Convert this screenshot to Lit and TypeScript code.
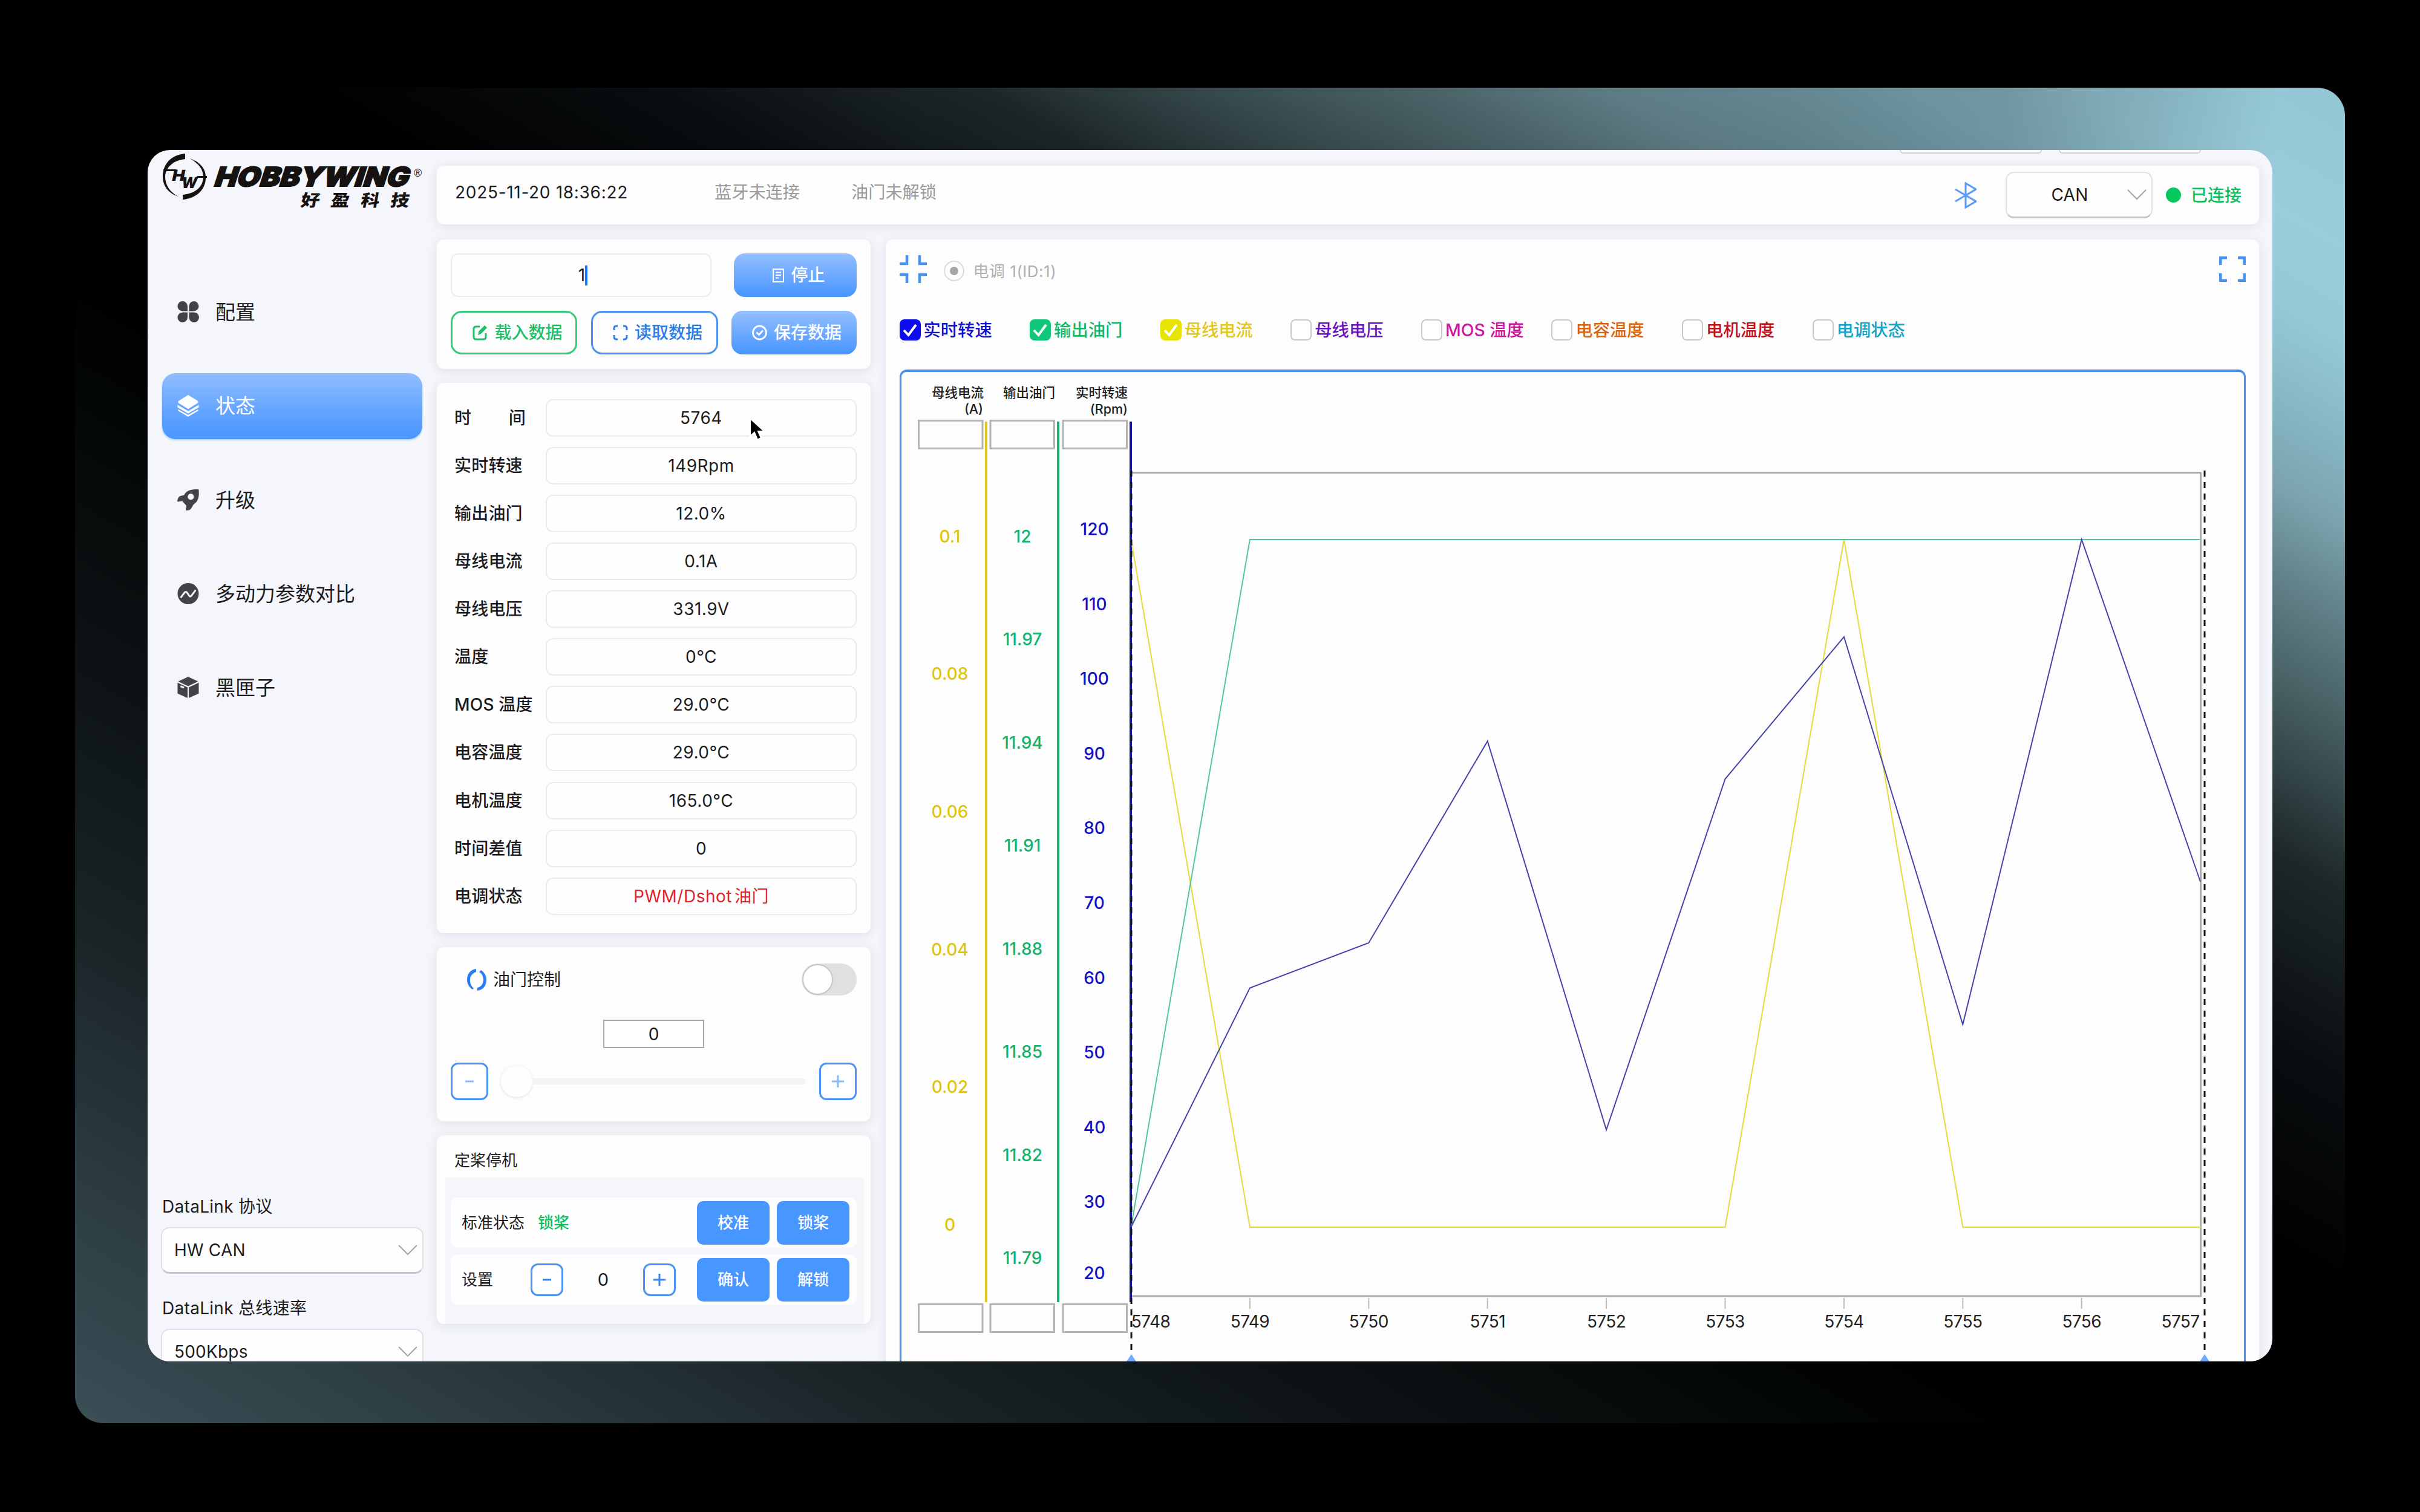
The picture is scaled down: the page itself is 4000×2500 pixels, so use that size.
import { LitElement, html, css, svg } from "lit";
import { customElement, property } from "lit/decorators.js";
import { classMap } from "lit/directives/class-map.js";

const X0 = 382.5;
const STEP = 196.4;
const Y_TOP = 281;
const Y_BOTTOM = 1418;

const FIELDS: [string, string][] = [
  ["实时转速", "149Rpm"],
  ["输出油门", "12.0%"],
  ["母线电流", "0.1A"],
  ["母线电压", "331.9V"],
  ["温度", "0°C"],
  ["MOS 温度", "29.0°C"],
  ["电容温度", "29.0°C"],
  ["电机温度", "165.0°C"],
  ["时间差值", "0"],
];

const SERIES = [
  { name: "实时转速", color: "#1010c8", box: "#0d0df0", on: true },
  { name: "输出油门", color: "#12b866", box: "#10c878", on: true },
  { name: "母线电流", color: "#e3c81c", box: "#e8e400", on: true },
  { name: "母线电压", color: "#6a14c0", box: "", on: false },
  { name: "MOS 温度", color: "#d0149c", box: "", on: false },
  { name: "电容温度", color: "#dc6410", box: "", on: false },
  { name: "电机温度", color: "#c01018", box: "", on: false },
  { name: "电调状态", color: "#10a4c8", box: "", on: false },
];

@customElement("hw-logo")
export class HwLogo extends LitElement {
  static styles = css`
    :host { display: block; width: 440px; height: 92px; }
    svg { display: block; overflow: visible; }
    .word { font: 900 44px Inter, "Liberation Sans", sans-serif; }
    .cn { font: 900 27px "Noto Sans CJK SC", sans-serif; }
    .reg { font: 400 18px "Liberation Sans", sans-serif; }
    .mono { font: 900 25px Inter, sans-serif; }
  `;
  render() {
    return html`<svg width="440" height="104" viewBox="0 0 440 104" fill="#161212">
      <path d="M38 2 C14 4 1 20 1 40 C1 56 11 68 27 73 C13 66 5 54 5 40 C6 25 18 13 38 11 Z" />
      <path d="M34 78 C58 76 73 60 72 40 C72 26 61 15 46 10 C60 18 68 28 68 40 C68 56 56 68 34 70 Z" />
      <path d="M2 28 L24 28 L22 31 L2 31 Z M58 39 L74 39 L74 42 L56 42 Z" />
      <g transform="skewX(-12)">
        <text class="mono" x="25" y="47" textLength="21" lengthAdjust="spacingAndGlyphs">H</text>
        <text class="mono" x="43" y="59" textLength="26" lengthAdjust="spacingAndGlyphs">W</text>
      </g>
      <g transform="translate(84 56) skewX(-18)">
        <text class="word" x="0" y="0" textLength="321" lengthAdjust="spacingAndGlyphs" stroke="#161212" stroke-width="2">HOBBYWING</text>
      </g>
      <text class="reg" x="416" y="40">®</text>
      <g transform="translate(228 89) skewX(-10) scale(1.15 1)">
        <text class="cn" x="0 43 86 129" y="0">好盈科技</text>
      </g>
    </svg>`;
  }
}

@customElement("hw-select")
export class HwSelect extends LitElement {
  @property() value = "";
  @property({ type: Boolean }) centered = false;
  static styles = css`
    :host { display: block; box-sizing: border-box; height: 77px; border-radius: 14px; background: #fefefe;
      border: 2px solid #e0e1e5; border-bottom: 3px solid #c4c6ca; }
    .row { display: flex; align-items: center; height: 72px; padding: 0 8px 0 20px; }
    .text { flex: 1; font-size: 28px; line-height: 40px; letter-spacing: 0.2px; }
    .mid { text-align: center; padding-right: 11px; }
    svg { display: block; }
  `;
  render() {
    return html`<div class="row">
      <span class=${classMap({ text: true, mid: this.centered })}>${this.value}</span>
      <svg width="32" height="18" viewBox="0 0 32 18" fill="none" stroke="#a2a4a8" stroke-width="2"><path d="M1 1 L16 16 L31 1" /></svg>
    </div>`;
  }
}

@customElement("hw-chart")
export class HwChart extends LitElement {
  static styles = css`
    :host { display: block; }
    svg { display: block; }
    .tick { font: 500 28px Inter, "Noto Sans CJK SC", sans-serif; text-anchor: middle; }
    .x { font: 400 28px Inter, sans-serif; text-anchor: middle; fill: #222; letter-spacing: -0.6px; }
    .title { font: 500 21.5px Inter, "Noto Sans CJK SC", sans-serif; text-anchor: end; fill: #1d1d1d; }
    .y1 { fill: #dfc510; }
    .y2 { fill: #12b46c; }
    .y3 { fill: #1212c4; }
    .cell { fill: #fdfdfd; stroke: #b4b4b4; stroke-width: 3; }
  `;
  private path(values: number[]) {
    return values.map((v, i) => `${X0 + STEP * i},${v}`).join(" ");
  }
  render() {
    const current = [Y_TOP, Y_BOTTOM, Y_BOTTOM, Y_BOTTOM, Y_BOTTOM, Y_BOTTOM, Y_TOP, Y_BOTTOM, Y_BOTTOM, Y_BOTTOM];
    const throttle = [Y_BOTTOM, ...Array(9).fill(Y_TOP)];
    const rpm = [Y_BOTTOM, 1022.5, 948, 614.5, 1257, 677, 442, 1083, Y_TOP, 847];
    const amps = ["0.1", "0.08", "0.06", "0.04", "0.02", "0"];
    const duty = ["12", "11.97", "11.94", "11.91", "11.88", "11.85", "11.82", "11.79"];
    const revs = ["120", "110", "100", "90", "80", "70", "60", "50", "40", "30", "20"];
    const cells = [31.5, 150, 270];
    return html`<svg width="2218" height="1637" viewBox="3 4 2218 1637">
      <text class="title" x="139" y="46">母线电流</text><text class="title" x="138" y="73">(A)</text>
      <text class="title" x="257" y="46">输出油门</text>
      <text class="title" x="377" y="46">实时转速</text><text class="title" x="377" y="73">(Rpm)</text>
      ${cells.map((x) => svg`<rect class="cell" x=${x} y="84.5" width="105.5" height="46" /><rect class="cell" x=${x} y="1545.5" width="105.5" height="46" />`)}
      <path d="M382.5 170.5 H2150.5 V1532 H382.5" fill="none" stroke="#ababab" stroke-width="3" />
      <path d="M143 86 V1542" stroke="#e2c81e" stroke-width="4" />
      <path d="M262 86 V1542" stroke="#22b46c" stroke-width="4" />
      <path d="M382 86 V1542" stroke="#1414a0" stroke-width="4" />
      ${amps.map((t, i) => svg`<text class="tick y1" x="83" y=${285.5 + 227.7 * i}>${t}</text>`)}
      ${duty.map((t, i) => svg`<text class="tick y2" x="203" y=${285.5 + 170.5 * i}>${t}</text>`)}
      ${revs.map((t, i) => svg`<text class="tick y3" x="322" y=${i === 10 ? 1503.5 : 274 + 123.6 * i}>${t}</text>`)}
      <polyline points=${this.path(current)} fill="none" stroke="#e6da3c" stroke-width="2" />
      <polyline points=${this.path(throttle)} fill="none" stroke="#50c896" stroke-width="2" />
      <polyline points=${this.path(rpm)} fill="none" stroke="#4444a8" stroke-width="2" />
      <path d="M383 167 V1628 M2157 167 V1628" stroke="#141414" stroke-width="3" stroke-dasharray="10 9" />
      ${[1, 2, 3, 4, 5, 6, 7, 8].map((i) => svg`<path d=${`M${X0 + STEP * i} 1535 V1553`} stroke="#bdbdbd" stroke-width="2" />`)}
      ${[0, 1, 2, 3, 4, 5, 6, 7, 8, 9].map((i) => svg`<text class="x" x=${i === 0 ? 415 : i === 9 ? 2117 : X0 + STEP * i} y="1584">${5748 + i}</text>`)}
      <path d="M383 1628 l11 17 h-22 Z M2157 1628 l11 17 h-22 Z" fill="#72aafc" />
    </svg>`;
  }
}

@customElement("app-root")
export class AppRoot extends LitElement {
  static styles = css`
    :host { display: block; box-sizing: border-box; width: 4000px; height: 2500px; padding: 145px 124px; background: #000; overflow: hidden;
      font-family: Inter, "Noto Sans CJK SC", sans-serif; color: #1c1c1e; font-size: 28px; line-height: 40px; }
    * { box-sizing: border-box; }
    svg { display: block; flex: none; }
    .frame { width: 3752px; height: 2208px; border-radius: 46px; padding: 103px 120px;
      background:
        linear-gradient(to right, transparent 36%, rgba(0, 0, 0, 0.2) 58%, rgba(0, 0, 0, 0.28) 76%, rgba(0, 0, 0, 0.26) 85%, rgba(0, 0, 0, 0.12) 92%, transparent 97%) 0 0 / 100% 110px no-repeat,
        linear-gradient(to top right, #3c4f56 0%, #2a3a40 10%, #182124 20%, #0e1416 28%, #050a0a 36%, #000 43%, #000 55%, #0a0e10 63%, #1e2829 70%, #4a6468 76.7%, #607f86 80%, #7ba3ae 83.6%, #87b7c5 87%, #95c9d8 90.5%, #9acddb 94%, #92c6d4 100%); }
    .window { width: 3512px; height: 2003px; border-radius: 37px; overflow: hidden; background: #f4f6fb; display: flex; position: relative; }
    .side { width: 478px; padding: 4px 24px 0; display: flex; flex-direction: column; flex: none; }
    .nav { display: flex; flex-direction: column; gap: 46.3px; margin-top: 117.5px; }
    .item { height: 109px; width: 430px; border-radius: 22px; padding-left: 25px; display: flex; align-items: center; gap: 27px; font-size: 33px; line-height: 48px; }
    .item.active { background: linear-gradient(#90beff, #62a3ff 60%, #4896ff); color: #fff; box-shadow: 0 2px 3px #a8d0ff; }
    .links { margin-top: 783px; display: flex; flex-direction: column; width: 434px; margin-left: -2px; }
    .links .lbl { padding-left: 2px; height: 40px; margin-bottom: 14px; letter-spacing: 0.3px; }
    .links hw-select { margin-bottom: 37px; flex: none; }
    .main { width: 3012px; display: flex; flex-direction: column; flex: none; }
    .tabs { height: 26px; flex: none; padding-left: 2418px; display: flex; gap: 28px; }
    .tab { width: 235px; height: 6px; background: #fbfcfd; border: 2px solid #cfd1d5; border-top: 0; border-radius: 0 0 12px 12px; }
    .card { background: #fdfdfe; border-radius: 12px; box-shadow: 0 3px 18px rgba(40, 44, 60, 0.11); flex: none; }
    .head { height: 97px; display: flex; align-items: center; padding: 0 29px 0 30px; }
    .clock { width: 429px; padding-bottom: 10px; letter-spacing: 0.7px; }
    .muted { width: 226px; color: #999; padding-bottom: 10px; font-size: 28.2px; }
    .grow { flex: 1; }
    .can { width: 243px; margin: 0 22px 0 48px; }
    .dot { width: 25px; height: 25px; border-radius: 50%; background: #06c85c; margin-right: 16px; }
    .ok { color: #0cc060; font-weight: 500; }
    .cols { display: flex; gap: 24.5px; margin-top: 24.5px; flex: none; }
    .left { width: 717px; display: flex; flex-direction: column; gap: 23px; }
    .right { width: 2270.5px; height: 1900px; padding: 26px 22px 0 23px; }
    .ctrl { height: 214.5px; padding: 23.5px 23px 0; display: flex; flex-direction: column; gap: 23px; }
    .line { display: flex; justify-content: space-between; align-items: center; }
    .box { border: 2px solid #ececee; border-radius: 12px; background: #fefefe; display: flex; align-items: center; justify-content: center; }
    .count { width: 431px; height: 72px; padding-left: 6px; }
    .caret { width: 4px; height: 33px; background: #1677ff; }
    .btn { height: 72px; border-radius: 18px; display: flex; align-items: center; justify-content: center; gap: 11px; font-weight: 500; }
    .load { width: 209px; padding-left: 12px; border: 3px solid #34cc78; color: #1cc068; }
    .read { width: 210px; padding-left: 11px; border: 3px solid #4a92ec; color: #2a7ee6; }
    .fill { background: linear-gradient(#94bfff, #4795ff); color: #fff; }
    .save { width: 207px; padding-left: 9px; }
    .stop { width: 203px; padding-left: 12px; }
    .data { height: 910px; padding: 27px 23px 0 29px; display: flex; flex-direction: column; gap: 17.07px; }
    .field { display: flex; align-items: center; height: 62px; flex: none; }
    .name { width: 151px; font-weight: 500; letter-spacing: 0.2px; white-space: nowrap; }
    .wide { display: flex; justify-content: space-between; width: 118px; margin-right: 33px; }
    .val { width: 514px; height: 62px; letter-spacing: 0.5px; }
    .red { color: #e0242c; gap: 4px; }
    .throttle { height: 288px; padding: 27px 23px 0; display: flex; flex-direction: column; }
    .tt { display: flex; align-items: center; gap: 11px; padding-left: 27px; }
    .switch { width: 91px; height: 53px; border-radius: 27px; background: #e0e0e2; padding: 1px; }
    .knob { width: 51px; height: 51px; border-radius: 50%; background: #fff; border: 2px solid #c6c6c8; }
    .num { width: 167px; height: 47px; border: 2px solid #a8a8a8; background: #fff; align-self: center; margin-top: 40px; display: flex; align-items: center; justify-content: center; }
    .slider { display: flex; align-items: center; margin-top: 24px; }
    .sq { width: 62px; height: 62px; border: 3px solid #4a94f4; border-radius: 12px; display: flex; align-items: center; justify-content: center; background: #fff; }
    .thumb { width: 52px; height: 52px; border-radius: 50%; background: #fefefe; box-shadow: 0 1px 4px rgba(0, 0, 0, 0.12); margin-left: 21px; }
    .track { width: 452px; height: 10px; background: #f4f4f5; border-radius: 0 5px 5px 0; margin-right: auto; }
    .lock { height: 312px; padding: 0 11px 0 14px; font-size: 26px; }
    .ltitle { height: 70px; padding: 22px 0 0 15px; font-size: 26px; }
    .panel { height: 242px; background: #f4f6fa; padding: 33px 12px 0 9px; display: flex; flex-direction: column; gap: 11px; }
    .strip { height: 83px; border-radius: 12px; background: #fefefe; display: flex; align-items: center; padding: 0 12px 0 18px; flex: none; }
    .state { margin-left: 22px; }
    .solid { width: 120px; height: 72px; border-radius: 10px; background: #4896ff; color: #fff; display: flex; align-items: center; justify-content: center; font-weight: 500; margin-left: 12px; }
    .sm { width: 54px; height: 54px; }
    .set { width: 114px; }
    .zero { width: 132px; text-align: center; font-size: 29px; }
    .top { display: flex; align-items: center; height: 46px; }
    .radio { width: 34px; height: 34px; border-radius: 50%; border: 2px solid #dcdcdc; display: flex; align-items: center; justify-content: center; margin: 7px 15px 0 28px; }
    .pip { width: 14px; height: 14px; border-radius: 50%; background: #a6a6a6; }
    .esc { color: #b0b0b0; font-size: 26px; padding-top: 8px; letter-spacing: 0.5px; }
    .legend { display: flex; margin-top: 58px; }
    .key { width: 215.6px; display: flex; align-items: center; gap: 5px; font-weight: 500; white-space: nowrap; font-size: 28.3px; }
    .chk { width: 35px; height: 35px; border-radius: 8px; display: flex; align-items: center; justify-content: center; flex: none; }
    .off { border: 2px solid #c9c9cb; background: #fff; }
    .plot { margin-top: 45px; width: 2225px; height: 1700px; border: 3px solid #4a90ea; border-top-width: 4px; border-radius: 12px; }
    .pointer { position: absolute; left: 994px; top: 443px; }
  `;

  private nav() {
    const icons = [
      svg`<path d="M8.5 0 A8.5 8.5 0 0 1 17 8.5 V17 H8.5 A8.5 8.5 0 0 1 8.5 0 Z M27.5 0 A8.5 8.5 0 0 1 27.5 17 H19.5 V8.5 A8.5 8.5 0 0 1 27.5 0 Z M8.5 19 H17 V27 A8.5 8.5 0 1 1 8.5 19 Z M19.5 19 H27.5 A8.5 8.5 0 1 1 19.5 27.5 Z" />`,
      svg`<path d="M18 0 L34 10 Q36 12 34 14 L18 24 L2 14 Q0 12 2 10 Z M0 17 L18 27.500 L36 17 V21 L18 31.500 L0 21 Z M1 24.500 L18 34 L35 24.500 V27 L18 37 L1 27 Z" />`,
      svg`<path fill-rule="evenodd" d="M36 1 C37 14 35 20 27 26 L24 31 Q22 36 15 36 Q14 36 14 34 L15 28 L8 20 L1 21 Q-1 21 0 18 Q1 12 6 11 L11 10 C15 2 22 0 34 0 Q36 0 36 1 Z M22.500 7.500 A5.200 5.200 0 1 0 22.500 18 A5.200 5.200 0 1 0 22.500 7.500 Z" />`,
      svg`<circle cx="18" cy="18" r="18" /><path d="M6 24 L12 16 Q14 14 16 16 L20 22 Q22 24 24 21 L30 13" fill="none" stroke="#f4f6fb" stroke-width="3" stroke-linecap="round" />`,
      svg`<path d="M18 0 L35 8 L18 16 L1 8 Z M0 10 L17 18 V36 L0 28.500 Z M36 10 L19 18 V36 L36 28.500 Z" /><path d="M5 16 L11 18.500" stroke="#f4f6fb" stroke-width="3" />`,
    ];
    const names = ["配置", "状态", "升级", "多动力参数对比", "黑匣子"];
    return names.map(
      (n, i) => html`<div class=${classMap({ item: true, active: i === 1 })}>
        <svg width="36" height="36" viewBox="0 0 36 37" fill=${i === 1 ? "#fff" : "#414348"}>${icons[i]}</svg><span>${n}</span>
      </div>`
    );
  }

  private sign(plus: boolean, color: string) {
    return html`<svg width="22" height="22" viewBox="0 0 22 22" stroke=${color} stroke-width="3"><path d=${plus ? "M1 11 H21 M11 1 V21" : "M4 11 H18"} /></svg>`;
  }

  render() {
    return html`<div class="frame"><div class="window">
      <div class="side">
        <hw-logo></hw-logo>
        <div class="nav">${this.nav()}</div>
        <div class="links">
          <span class="lbl">DataLink 协议</span><hw-select value="HW CAN"></hw-select>
          <span class="lbl">DataLink 总线速率</span><hw-select value="500Kbps"></hw-select>
        </div>
      </div>
      <div class="main">
        <div class="tabs"><div class="tab"></div><div class="tab"></div></div>
        <div class="card head">
          <span class="clock">2025-11-20 18:36:22</span>
          <span class="muted">蓝牙未连接</span><span class="muted">油门未解锁</span>
          <span class="grow"></span>
          <svg width="36" height="44" viewBox="0 0 36 44" fill="none" stroke="#5a9cf6" stroke-width="3"><path d="M1 12 L35 32 L18 42 V2 L35 12 L1 32" /></svg>
          <hw-select class="can" centered value="CAN"></hw-select>
          <span class="dot"></span><span class="ok">已连接</span>
        </div>
        <div class="cols">
          <div class="left">
            <div class="card ctrl">
              <div class="line">
                <div class="box count">1<span class="caret"></span></div>
                <div class="btn fill stop">
                  <svg width="19" height="23" viewBox="0 0 19 23" fill="none" stroke="#fff" stroke-width="2"><path d="M1 1 H18 V22 H1 Z M5 6.500 H14 M5 11 H14 M5 15.500 H10" /></svg>停止</div>
              </div>
              <div class="line">
                <div class="btn load"><svg width="25" height="26" viewBox="0 0 25 26" fill="none" stroke="#1cc068" stroke-width="3"><path d="M12 3 H6 Q2 3 2 7 V20 Q2 24 6 24 H18 Q22 24 22 20 V14" /><path d="M10 16 L11 11 L20 2 L23 5 L14 14 Z" fill="#1cc068" stroke-width="1.500" /></svg>载入数据</div>
                <div class="btn read"><svg width="25" height="26" viewBox="0 0 25 26" fill="none" stroke="#2a7ee6" stroke-width="3"><path d="M2 9 V6 Q2 2 6 2 H8 M17 2 H19 Q23 2 23 6 V9 M23 17 V20 Q23 24 19 24 H17 M8 24 H6 Q2 24 2 20 V17" /></svg>读取数据</div>
                <div class="btn fill save"><svg width="25" height="26" viewBox="0 0 25 26" fill="none" stroke="#fff" stroke-width="2.800"><circle cx="12.500" cy="13" r="11" /><path d="M7.500 12.500 L11.500 16.500 L18 9.500" /></svg>保存数据</div>
              </div>
            </div>
            <div class="card data">
              <div class="field"><span class="wide name"><span>时</span><span>间</span></span><span class="box val">5764</span></div>
              ${FIELDS.map(([n, v]) => html`<div class="field"><span class="name">${n}</span><span class="box val">${v}</span></div>`)}
              <div class="field"><span class="name">电调状态</span><span class="box val red"><span>PWM/Dshot</span><span>油门</span></span></div>
            </div>
            <div class="card throttle">
              <div class="line">
                <div class="tt"><svg width="32" height="36" viewBox="0 0 32 36" fill="#2a7cf4"><path d="M15 0 C5 1 0 9 0 18 C0 25 4 31 9 34 L11 32 C6 28 5 23 5 18 C5 12 9 7 15 5 Z" /><path d="M17 36 C27 35 32 27 32 18 C32 11 28 5 23 2 L20 5 C25 8 27 13 27 18 C27 25 23 30 17 31 Z" /></svg>油门控制</div>
                <div class="switch"><div class="knob"></div></div>
              </div>
              <div class="num">0</div>
              <div class="slider">
                <div class="sq">${this.sign(false, "#8ab8f8")}</div>
                <div class="thumb"></div><div class="track"></div>
                <div class="sq">${this.sign(true, "#8ab8f8")}</div>
              </div>
            </div>
            <div class="card lock">
              <div class="ltitle">定桨停机</div>
              <div class="panel">
                <div class="strip"><span>标准状态</span><span class="ok state">锁桨</span><span class="grow"></span><span class="solid">校准</span><span class="solid">锁桨</span></div>
                <div class="strip"><span class="set">设置</span><span class="sq sm">${this.sign(false, "#3a88ee")}</span><span class="zero">0</span><span class="sq sm">${this.sign(true, "#3a88ee")}</span><span class="grow"></span><span class="solid">确认</span><span class="solid">解锁</span></div>
              </div>
            </div>
          </div>
          <div class="card right">
            <div class="top">
              <svg width="45" height="46" viewBox="0 0 45 46" fill="none" stroke="#4492f2" stroke-width="4.500"><path d="M0 14 H12 V0 M33 0 V14 H45 M0 32 H12 V46 M33 46 V32 H45" /></svg>
              <span class="radio"><span class="pip"></span></span><span class="esc">电调 1(ID:1)</span><span class="grow"></span>
              <svg width="44" height="42" viewBox="0 0 44 42" fill="none" stroke="#4492f2" stroke-width="4.500"><path d="M2.300 14 V2.300 H13 M31 2.300 H41.700 V14 M41.700 28 V39.700 H31 M13 39.700 H2.300 V28" /></svg>
            </div>
            <div class="legend">
              ${SERIES.map((s) => html`<span class="key" style=${`color:${s.color}`}>
                ${s.on
                  ? html`<span class="chk" style=${`background:${s.box}`}><svg width="25" height="24" viewBox="0 0 25 24" fill="none" stroke="#fff" stroke-width="4"><path d="M2 12 L9.500 20 L22 3" /></svg></span>`
                  : html`<span class="chk off"></span>`}${s.name}</span>`)}
            </div>
            <div class="plot"><hw-chart></hw-chart></div>
          </div>
        </div>
      </div>
      <svg class="pointer" width="30" height="40" viewBox="0 0 30 40"><path d="M2 1 L2 30 L9 24 L14 36 L20 33 L15 22 L25 22 Z" fill="#000" stroke="#fff" stroke-width="2" /></svg>
    </div></div>`;
  }
}
